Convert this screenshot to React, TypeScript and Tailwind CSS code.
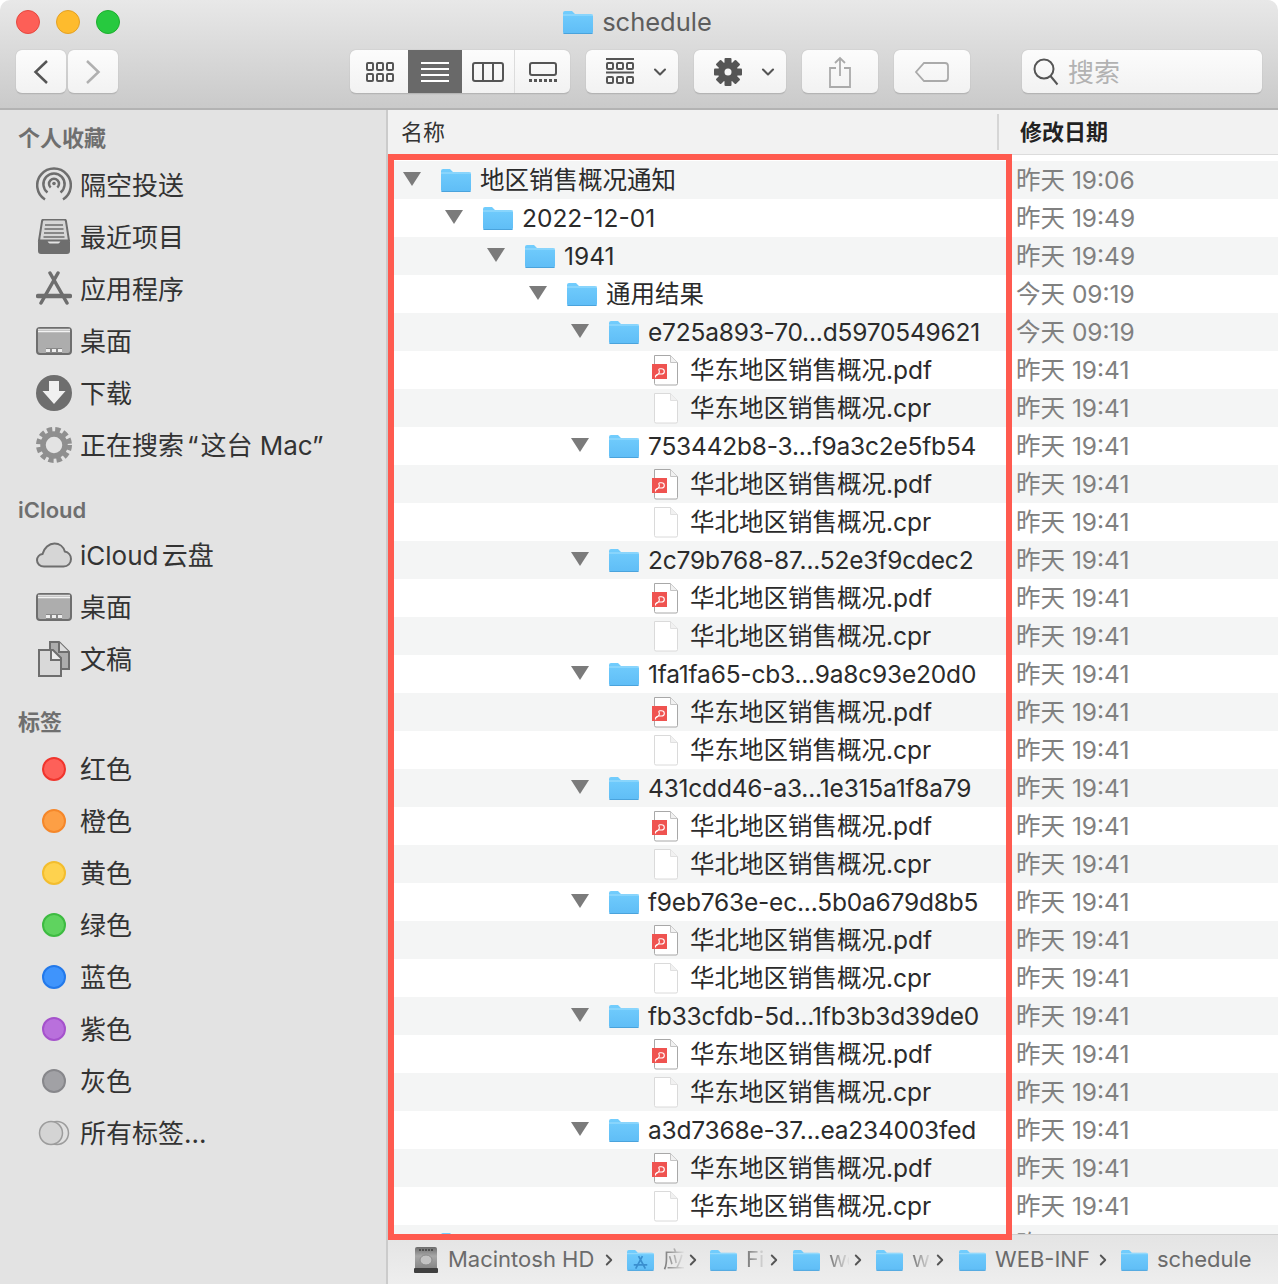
import { ChevronDown, ChevronRight } from "lucide-react";
import type { ReactNode } from "react";

type Row = { level: number; kind: "folder" | "pdf" | "cpr"; name: string; date: string };

const indent = ["pl-[15px]", "pl-[57px]", "pl-[99px]", "pl-[141px]", "pl-[183px]", "pl-[225px]"];

const groups: [string, string][] = [
  ["e725a893-70...d5970549621", "华东"],
  ["753442b8-3...f9a3c2e5fb54", "华北"],
  ["2c79b768-87...52e3f9cdec2", "华北"],
  ["1fa1fa65-cb3...9a8c93e20d0", "华东"],
  ["431cdd46-a3...1e315a1f8a79", "华北"],
  ["f9eb763e-ec...5b0a679d8b5", "华北"],
  ["fb33cfdb-5d...1fb3b3d39de0", "华东"],
  ["a3d7368e-37...ea234003fed", "华东"],
];

const rows: Row[] = [
  { level: 0, kind: "folder", name: "地区销售概况通知", date: "昨天 19:06" },
  { level: 1, kind: "folder", name: "2022-12-01", date: "昨天 19:49" },
  { level: 2, kind: "folder", name: "1941", date: "昨天 19:49" },
  { level: 3, kind: "folder", name: "通用结果", date: "今天 09:19" },
];
groups.forEach(([id, area], i) => {
  rows.push({ level: 4, kind: "folder", name: id, date: i === 0 ? "今天 09:19" : "昨天 19:41" });
  rows.push({ level: 5, kind: "pdf", name: area + "地区销售概况.pdf", date: "昨天 19:41" });
  rows.push({ level: 5, kind: "cpr", name: area + "地区销售概况.cpr", date: "昨天 19:41" });
});

const FolderIcon = ({ className = "w-[30px] h-[24px]" }: { className?: string }) => (
  <svg viewBox="0 0 30 24" className={className}>
    <defs>
      <linearGradient id="fold" x1="0" y1="0" x2="0" y2="1">
        <stop offset="0" stopColor="#72cdfd" />
        <stop offset="1" stopColor="#5fbdf6" />
      </linearGradient>
    </defs>
    <path d="M0 3a2 2 0 0 1 2-2h7l3 3h16a2 2 0 0 1 2 2v16a2 2 0 0 1-2 2H2a2 2 0 0 1-2-2z" fill="url(#fold)" />
    <path d="M0 5h30" stroke="#a2dffd" strokeWidth="1" />
    <path d="M.5 23.500h29" stroke="#4aa3dc" strokeWidth="1" />
  </svg>
);

const Triangle = () => (
  <svg viewBox="0 0 18 14" className="w-[18px] h-[14px] -mt-[2px]">
    <path d="M0 0h18l-9 14z" fill="#7b7b7b" />
  </svg>
);

const PageIcon = ({ pdf }: { pdf?: boolean }) => (
  <svg viewBox="0 0 30 32" className="w-[30px] h-[32px]">
    <path
      d="M3.500 1.500h16l7 7v21a1.500 1.500 0 0 1-1.500 1.500H5a1.500 1.500 0 0 1-1.500-1.500z"
      fill="#fff"
      stroke={pdf ? "#a8a8a8" : "#dadada"}
    />
    <path d="M19.500 1.500v7h7" fill="#f1f1f1" stroke={pdf ? "#c4c4c4" : "#e0e0e0"} />
    {pdf && (
      <>
        <rect x="1" y="10" width="15" height="15" fill="#ef5350" />
        <path
          d="M4.500 22.500c0-1.500 2-2.500 3.500-2.500h2.500c1.800 0 2.800-1.200 2.800-2.600s-1-2.600-2.800-2.600H9c-1.200 0-1.500 1-.9 1.800.6.900.1 3.300-2 4.500-1 .6-1.900.9-1.600 1.400z"
          fill="none"
          stroke="#fff"
          strokeWidth="1.100"
        />
      </>
    )}
  </svg>
);

const ToolButton = ({ className, children }: { className: string; children: ReactNode }) => (
  <div
    className={`h-[44px] flex items-center justify-center rounded-[6px] bg-gradient-to-b from-[#fcfcfc] to-[#f2f2f2] border-b border-[#b4b4b4] shadow-[0_0_1px_rgba(0,0,0,0.3)] ${className}`}
  >
    {children}
  </div>
);

const GroupGlyph = () => (
  <svg viewBox="0 0 28 28" className="w-[28px] h-[28px]" fill="none" stroke="#555" strokeWidth="2">
    <path d="M0 1h28M0 14.500h28" />
    {[5, 19].map((y) =>
      [1, 11, 21].map((x) => <rect key={`${x}-${y}`} x={x} y={y} width="6" height="6" rx="1" />),
    )}
  </svg>
);

const GearSolid = () => (
  <svg viewBox="0 0 28 28" className="w-[28px] h-[28px]" fill="#555">
    {[0, 45, 90, 135].map((a) => (
      <rect key={a} x="10.500" y="0" width="7" height="28" rx="1" transform={`rotate(${a} 14 14)`} />
    ))}
    <circle cx="14" cy="14" r="10" />
    <circle cx="14" cy="14" r="3.500" fill="#f6f6f6" />
  </svg>
);

const AirdropIcon = () => (
  <svg viewBox="0 0 36 36" className="w-[36px] h-[36px]" fill="none" stroke="#6e6e6e" strokeWidth="2.500">
    <path d="M9 32.500a16.800 16.800 0 1 1 18 0" />
    <path d="M11.500 25.500a10.600 10.600 0 1 1 13 0" />
    <path d="M14.700 20.500a5 5 0 1 1 6.600 0" />
    <circle cx="18" cy="16.500" r="1.800" fill="#6e6e6e" stroke="none" />
  </svg>
);

const RecentsIcon = () => (
  <svg viewBox="0 0 36 36" className="w-[36px] h-[36px]">
    <path d="M6 2.500a2 2 0 0 1 2-2h20a2 2 0 0 1 2 2l3 19H3z" fill="#d6d6d6" stroke="#6e6e6e" strokeWidth="2" />
    <path d="M9 6h18M8.500 10h19M8 14h20M7.500 18h21" stroke="#6e6e6e" strokeWidth="1.500" />
    <path
      d="M2 23a2 2 0 0 1 2-2h6c1 0 1.500.6 1.800 1.500.5 1.500 1.500 2 2.700 2h7c1.200 0 2.200-.5 2.700-2 .3-.9.8-1.500 1.800-1.500h6a2 2 0 0 1 2 2v9a3 3 0 0 1-3 3H5a3 3 0 0 1-3-3z"
      fill="#6e6e6e"
    />
  </svg>
);

const AppsIcon = () => (
  <svg viewBox="0 0 36 36" className="w-[36px] h-[36px]" fill="none" stroke="#6e6e6e" strokeLinecap="round">
    <path d="M5 32 22 2M31 32 14 2" strokeWidth="3.500" />
    <path d="M2 25h32" strokeWidth="4.500" />
  </svg>
);

const DesktopIcon = () => (
  <svg viewBox="0 0 36 28" className="w-[36px] h-[28px]">
    <rect x="1" y="1" width="34" height="26" rx="3" fill="#adadad" stroke="#6e6e6e" strokeWidth="2" />
    <path d="M2 4.500h32" stroke="#f2f2f2" strokeWidth="1.500" />
    <path d="M2 2.500h32" stroke="#dfdfdf" strokeWidth="1.500" />
    <rect x="10" y="21" width="16" height="5" fill="#888" />
    <path d="M10 23.500h16" stroke="#eee" strokeWidth="3" strokeDasharray="4 2" />
  </svg>
);

const DownloadIcon = () => (
  <svg viewBox="0 0 36 36" className="w-[36px] h-[36px]">
    <circle cx="18" cy="18" r="18" fill="#6e6e6e" />
    <path d="M13 6h10v10h6.500L18 29 6.500 16H13z" fill="#f0f0f0" />
  </svg>
);

const GearOutline = () => (
  <svg viewBox="0 0 36 36" className="w-[36px] h-[36px]" fill="none" stroke="#8f8f8f">
    <circle cx="18" cy="18" r="11" strokeWidth="5.500" />
    <circle cx="18" cy="18" r="15.500" strokeWidth="5" strokeDasharray="5.200 3" />
  </svg>
);

const CloudIcon = () => (
  <svg viewBox="0 0 36 26" className="w-[36px] h-[26px]">
    <path
      d="M8 24.500c-4 0-7-2.800-7-6.300 0-3.200 2.400-5.700 5.500-6.200C8 6 13 1.500 18.500 1.500c5 0 9 3.200 10.300 8 3.600.7 6.200 3.800 6.200 7.500 0 4.300-3.200 7.500-7.500 7.500z"
      fill="#d6d6d6"
      stroke="#6e6e6e"
      strokeWidth="2"
    />
  </svg>
);

const DocsIcon = () => (
  <svg viewBox="0 0 36 36" className="w-[36px] h-[36px]" stroke="#6e6e6e" strokeWidth="2">
    <path d="M14 1h9l10 10v17H14z" fill="#adadad" />
    <path d="M23 1v10h10" fill="#dcdcdc" />
    <path d="M3 9h14l8 8v18H3z" fill="#d9d9d9" />
    <path d="M15 9v10h10" fill="#ececec" />
  </svg>
);

const TagDot = ({ className }: { className: string }) => (
  <span className={`block w-[24px] h-[24px] rounded-full border-2 ${className}`} />
);

const AllTags = () => (
  <svg viewBox="0 0 32 26" className="w-[32px] h-[26px]" fill="#d4d4d4" stroke="#9c9c9c" strokeWidth="1.500">
    <circle cx="19" cy="13" r="11.500" fill="#e0e0e0" />
    <circle cx="13" cy="13" r="11.500" />
  </svg>
);

const DiskIcon = () => (
  <svg viewBox="0 0 26 26" className="w-[26px] h-[26px]">
    <defs>
      <linearGradient id="disk" x1="0" y1="0" x2="0" y2="1">
        <stop offset="0" stopColor="#6c6c6c" />
        <stop offset="0.35" stopColor="#a8a8a8" />
        <stop offset="1" stopColor="#7a7a7a" />
      </linearGradient>
    </defs>
    <rect x="2" y="0" width="22" height="26" rx="2" fill="url(#disk)" />
    <ellipse cx="13" cy="13" rx="6" ry="5" fill="#c2c2c2" stroke="#8a8a8a" />
    <rect x="1" y="21" width="24" height="5" rx="1" fill="#3f3f3f" />
    <path d="M6 3h14" stroke="#3f3f3f" strokeWidth="1.500" strokeDasharray="2 1" />
  </svg>
);

const AppFolderIcon = () => (
  <span className="relative block w-[27px] h-[24px]">
    <FolderIcon className="w-[27px] h-[24px]" />
    <svg viewBox="0 0 28 24" className="absolute inset-0 w-[27px] h-[24px]" fill="none" stroke="#3a8fcf" strokeWidth="1.800">
      <path d="M9 21 16 8M19 21 12 8M7 17h14" />
    </svg>
  </span>
);

const SideItem = ({ icon, label }: { icon: ReactNode; label: ReactNode }) => (
  <div className="h-[52px] flex items-center pl-[36px]">
    <span className="w-[36px] flex justify-center items-center">{icon}</span>
    <span className="ml-[8px] text-[26px] text-[#333] whitespace-nowrap">{label}</span>
  </div>
);

const SideHeading = ({ className, label }: { className: string; label: string }) => (
  <div className={`flex items-end pl-[18px] text-[22px] leading-[30px] font-semibold text-[#6f6f6f] ${className}`}>
    {label}
  </div>
);

const Crumb = ({
  icon,
  label,
  fade,
  className,
  labelWidth,
}: {
  icon: ReactNode;
  label: string;
  fade?: boolean;
  className: string;
  labelWidth: string;
}) => (
  <div className={`flex items-center ${className}`}>
    {icon}
    <span
      className={`ml-[9px] whitespace-nowrap overflow-hidden ${labelWidth} ${
        fade ? "text-transparent bg-clip-text bg-gradient-to-r from-[#777] to-[#e0e0e0]" : "text-[#6b6b6b]"
      }`}
    >
      {label}
    </span>
    <ChevronRight className="w-[18px] h-[18px] text-[#555]" strokeWidth={2.500} />
  </div>
);

const crumbFolder = <FolderIcon className="w-[27px] h-[24px]" />;

export default function App() {
  return (
    <div className="w-[1278px] h-[1284px] relative overflow-hidden bg-white font-['Inter','Noto_Sans_CJK_SC',sans-serif]">
      <div className="h-full flex flex-col rounded-t-[10px] overflow-hidden">
        {/* title bar */}
        <div className="h-[110px] shrink-0 bg-gradient-to-b from-[#e8e8e8] to-[#cacaca] border-b-2 border-[#b3b3b3]">
          <div className="h-[44px] grid grid-cols-[1fr_auto_1fr] items-center">
            <div className="flex gap-[16px] pl-[16px]">
              <span className="w-[24px] h-[24px] rounded-full bg-[#fd5f57] border border-[#e5483f]" />
              <span className="w-[24px] h-[24px] rounded-full bg-[#febb2d] border border-[#e3a024]" />
              <span className="w-[24px] h-[24px] rounded-full bg-[#27c93f] border border-[#1dae2e]" />
            </div>
            <div className="flex items-center gap-[9px] mr-[3px]">
              <FolderIcon />
              <span className="mt-[1px] text-[25.500px] text-[#5d5d5d]">schedule</span>
            </div>
            <div />
          </div>
          <div className="flex pl-[16px] pt-[6px]">
            <div className="flex gap-[2px]">
              <ToolButton className="w-[50px]">
                <svg viewBox="0 0 16 26" className="w-[16px] h-[26px]" fill="none" stroke="#555" strokeWidth="2.500">
                  <path d="M14 2 2.500 13 14 24" />
                </svg>
              </ToolButton>
              <ToolButton className="w-[50px]">
                <svg viewBox="0 0 16 26" className="w-[16px] h-[26px]" fill="none" stroke="#b0b0b0" strokeWidth="2.500">
                  <path d="m2 2 11.500 11L2 24" />
                </svg>
              </ToolButton>
            </div>
            <ToolButton className="ml-[232px] w-[220px] overflow-hidden !justify-start">
              <div className="w-[58px] flex justify-center pl-[1px]">
                <svg viewBox="0 0 28 20" className="w-[28px] h-[20px]" fill="none" stroke="#555" strokeWidth="2">
                  {[1, 12].map((y) =>
                    [1, 11, 21].map((x) => <rect key={`${x}-${y}`} x={x} y={y} width="6" height="7" rx="1" />),
                  )}
                </svg>
              </div>
              <div className="w-[54px] h-full flex items-center justify-center bg-[#696969] pr-[1px]">
                <svg viewBox="0 0 28 20" className="w-[28px] h-[20px]" stroke="#fff" strokeWidth="2">
                  <path d="M0 1h28M0 7h28M0 13h28M0 19h28" />
                </svg>
              </div>
              <div className="w-[53px] h-full flex items-center justify-center border-r border-[#dcdcdc]">
                <svg viewBox="0 0 32 20" className="w-[32px] h-[20px]" fill="none" stroke="#555" strokeWidth="2">
                  <rect x="1" y="1" width="30" height="18" rx="2" />
                  <path d="M11 1v18M21 1v18" />
                </svg>
              </div>
              <div className="flex-1 flex justify-center">
                <svg viewBox="0 0 28 20" className="w-[28px] h-[20px]" fill="none" stroke="#555" strokeWidth="2">
                  <rect x="1" y="1" width="26" height="12" rx="2" />
                  <path d="M0 18.500h28" strokeWidth="3" strokeDasharray="3 2" />
                </svg>
              </div>
            </ToolButton>
            <ToolButton className="ml-[16px] w-[92px] !justify-start pl-[20px] gap-[16px]">
              <GroupGlyph />
              <ChevronDown className="w-[20px] h-[20px] text-[#555]" strokeWidth={2.500} />
            </ToolButton>
            <ToolButton className="ml-[16px] w-[92px] !justify-start pl-[20px] gap-[16px]">
              <GearSolid />
              <ChevronDown className="w-[20px] h-[20px] text-[#555]" strokeWidth={2.500} />
            </ToolButton>
            <ToolButton className="ml-[16px] w-[76px]">
              <svg viewBox="0 0 24 32" className="w-[24px] h-[32px]" fill="none" stroke="#aaa" strokeWidth="1.800">
                <path d="M12 20V2M7 7l5-5 5 5M8 12H2v19h20V12h-6" />
              </svg>
            </ToolButton>
            <ToolButton className="ml-[16px] w-[76px]">
              <svg viewBox="0 0 34 22" className="w-[34px] h-[22px]" fill="none" stroke="#aaa" strokeWidth="1.800">
                <path d="M9 2h21a3 3 0 0 1 3 3v12a3 3 0 0 1-3 3H9l-8-9z" />
              </svg>
            </ToolButton>
            <ToolButton className="ml-[52px] w-[240px] !justify-start pl-[11px]">
              <svg viewBox="0 0 26 28" className="w-[26px] h-[28px]" fill="none" stroke="#555" strokeWidth="2">
                <circle cx="11" cy="11" r="9.500" />
                <path d="m17.500 18 7 8.500" />
              </svg>
              <span className="ml-[9px] mt-[2px] text-[26px] text-[#b2b2b2]">搜索</span>
            </ToolButton>
          </div>
        </div>

        <div className="flex-1 flex min-h-0">
          {/* sidebar */}
          <div className="w-[388px] shrink-0 bg-[#e3e3e3] border-r-2 border-[#cbcbcb]">
            <SideHeading className="h-[49px] pb-[6px]" label="个人收藏" />
            <SideItem icon={<AirdropIcon />} label="隔空投送" />
            <SideItem icon={<RecentsIcon />} label="最近项目" />
            <SideItem icon={<AppsIcon />} label="应用程序" />
            <SideItem icon={<DesktopIcon />} label="桌面" />
            <SideItem icon={<DownloadIcon />} label="下载" />
            <SideItem
              icon={<GearOutline />}
              label={
                <>
                  正在搜索<span className="pl-[3px] pr-[2px]">“</span>这台 Mac”
                </>
              }
            />
            <SideHeading className="h-[58px] pb-[4px]" label="iCloud" />
            <SideItem
              icon={<CloudIcon />}
              label={<span className="[word-spacing:-4px]">iCloud 云盘</span>}
            />
            <SideItem icon={<DesktopIcon />} label="桌面" />
            <SideItem icon={<DocsIcon />} label="文稿" />
            <SideHeading className="h-[58px] pb-[6px]" label="标签" />
            <SideItem icon={<TagDot className="bg-[#fe6059] border-[#f0352d]" />} label="红色" />
            <SideItem icon={<TagDot className="bg-[#fd9f45] border-[#f5872a]" />} label="橙色" />
            <SideItem icon={<TagDot className="bg-[#fed24e] border-[#f3bd2e]" />} label="黄色" />
            <SideItem icon={<TagDot className="bg-[#5fd35f] border-[#3dbb41]" />} label="绿色" />
            <SideItem icon={<TagDot className="bg-[#3f94fc] border-[#2379ea]" />} label="蓝色" />
            <SideItem icon={<TagDot className="bg-[#b970dc] border-[#a552cc]" />} label="紫色" />
            <SideItem icon={<TagDot className="bg-[#a1a1a5] border-[#87878b]" />} label="灰色" />
            <SideItem icon={<AllTags />} label="所有标签..." />
          </div>

          {/* file list */}
          <div className="flex-1 min-w-0 flex flex-col bg-white">
            <div className="h-[45px] shrink-0 flex items-center bg-[#f2f2f2] border-b border-[#dcdcdc] text-[22px]">
              <span className="w-[609px] pl-[13px] text-[#333]">名称</span>
              <span className="w-[2px] h-[36px] bg-[#d6d6d6]" />
              <span className="ml-[21px] font-semibold text-[#222]">修改日期</span>
            </div>
            <div className="h-[6px] shrink-0 bg-white" />
            <div className="flex-1 min-h-0 overflow-hidden">
              {[...rows, { level: 0, kind: "folder" as const, name: "", date: "昨天 19:06" }].map((row, i) => (
                <div
                  key={i}
                  className={`h-[38px] flex items-center ${i % 2 === 0 ? "bg-[#f4f5f5]" : "bg-white"}`}
                >
                  <div className={`w-[628px] shrink-0 flex items-center ${indent[row.level]}`}>
                    <span className="w-[18px] flex justify-center">{row.kind === "folder" && <Triangle />}</span>
                    <span className="ml-[20px] w-[30px] flex justify-center">
                      {row.kind === "folder" ? <FolderIcon /> : <PageIcon pdf={row.kind === "pdf"} />}
                    </span>
                    <span
                      className={`ml-[9px] text-[24.500px] text-[#2b2b2b] whitespace-nowrap ${
                        row.level === 4 ? "tracking-[-0.2px]" : ""
                      }`}
                    >
                      {row.name}
                    </span>
                  </div>
                  <span className="text-[24.500px] text-[#808080] whitespace-nowrap">{row.date}</span>
                </div>
              ))}
            </div>
            {/* path bar */}
            <div className="h-[50px] shrink-0 flex items-center pl-[25px] bg-gradient-to-b from-[#e4e4e4] to-[#eeeeee] border-t border-[#d0d0d0] text-[22px]">
              <Crumb icon={<DiskIcon />} label="Macintosh HD" labelWidth="w-[152px]" className="" />
              <Crumb icon={<AppFolderIcon />} label="应" fade labelWidth="w-[21px]" className="ml-[9px]" />
              <Crumb icon={crumbFolder} label="Fi" fade labelWidth="w-[19px]" className="ml-[8px]" />
              <Crumb icon={crumbFolder} label="wo" fade labelWidth="w-[20px]" className="ml-[10px]" />
              <Crumb icon={crumbFolder} label="wo" fade labelWidth="w-[19px]" className="ml-[9px]" />
              <Crumb icon={crumbFolder} label="WEB-INF" labelWidth="w-[99px]" className="ml-[10px]" />
              <div className="flex items-center ml-[9px]">
                {crumbFolder}
                <span className="ml-[9px] text-[#6b6b6b]">schedule</span>
              </div>
            </div>
          </div>
        </div>
      </div>
      {/* annotation frame */}
      <div className="absolute left-[388px] top-[154px] w-[624px] h-[1086px] border-[6px] border-[#ff5a4f] pointer-events-none" />
    </div>
  );
}
